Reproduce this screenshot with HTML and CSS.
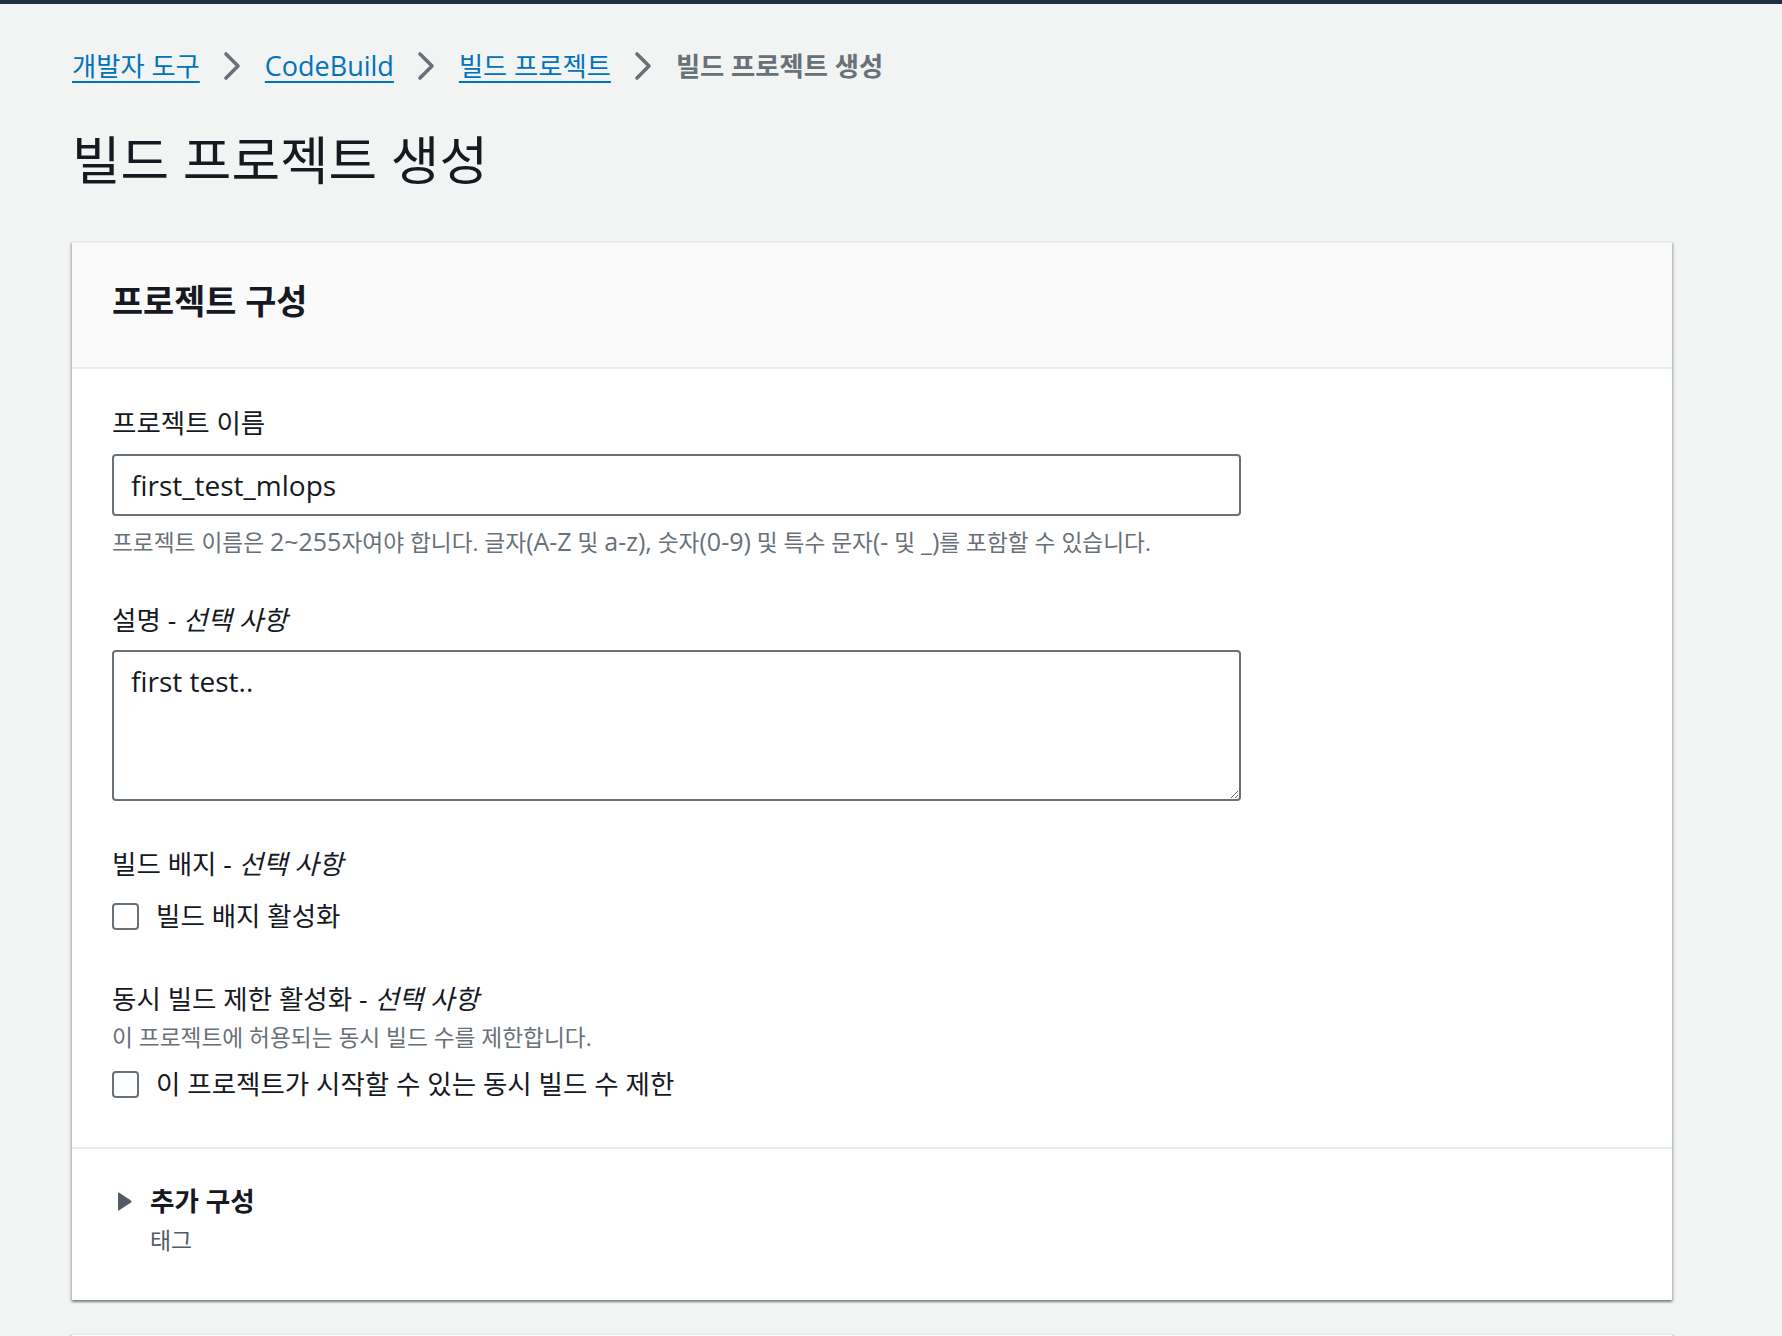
FILE: index.html
```html
<!DOCTYPE html>
<html lang="ko">
<head>
<meta charset="utf-8">
<title>빌드 프로젝트 생성</title>
<link rel="stylesheet" href="styles.css">
</head>
<body>
<div class="topbar"></div>
<main class="page">
  <nav class="breadcrumbs">
    <a class="crumb" href="#">개발자 도구</a>
    <svg class="chev" width="18" height="30" viewBox="0 0 18 30"><path d="M3 3 L15 15 L3 27"/></svg>
    <a class="crumb crumb-latin" href="#">CodeBuild</a>
    <svg class="chev" width="18" height="30" viewBox="0 0 18 30"><path d="M3 3 L15 15 L3 27"/></svg>
    <a class="crumb" href="#">빌드 프로젝트</a>
    <svg class="chev" width="18" height="30" viewBox="0 0 18 30"><path d="M3 3 L15 15 L3 27"/></svg>
    <span class="crumb current">빌드 프로젝트 생성</span>
  </nav>

  <h1 class="title">빌드 프로젝트 생성</h1>

  <section class="card">
    <header class="card-header"><h2 class="card-title">프로젝트 구성</h2></header>
    <div class="card-body">
      <div class="field">
        <label class="label" for="pname">프로젝트 이름</label>
        <input class="input" id="pname" type="text" value="first_test_mlops">
        <p class="hint">프로젝트 이름은 <span class="lt">2~255</span>자여야 합니다. 글자<span class="lt">(A-Z</span> 및 <span class="lt">a-z),</span> 숫자<span class="lt">(0-9)</span> 및 특수 문자<span class="lt">(-</span> 및 <span class="lt">_)</span>를 포함할 수 있습니다.</p>
      </div>

      <div class="field f-desc">
        <label class="label" for="pdesc">설명 - <i>선택 사항</i></label>
        <textarea class="textarea" id="pdesc">first test..</textarea>
      </div>

      <div class="field f-badge">
        <div class="label">빌드 배지 - <i>선택 사항</i></div>
        <label class="check-row"><input class="cb" type="checkbox"><span>빌드 배지 활성화</span></label>
      </div>

      <div class="field f-limit">
        <div class="label">동시 빌드 제한 활성화 - <i>선택 사항</i></div>
        <p class="hint hint-tight">이 프로젝트에 허용되는 동시 빌드 수를 제한합니다.</p>
        <label class="check-row check-row-tight"><input class="cb" type="checkbox"><span>이 프로젝트가 시작할 수 있는 동시 빌드 수 제한</span></label>
      </div>
    </div>

    <div class="expander">
      <div class="exp-head">
        <svg class="caret" width="15" height="19" viewBox="0 0 15 19"><path d="M1 1.5 Q1 0 2.3 0.8 L14 8.4 Q15 9.5 14 10.6 L2.3 18.2 Q1 19 1 17.5 Z"/></svg>
        <span class="exp-title">추가 구성</span>
      </div>
      <div class="exp-sub">태그</div>
    </div>
  </section>

  <section class="card card-next">
    <div class="card-next-header"></div>
  </section>
</main>
</body>
</html>
```

FILE: styles.css
```css
html, body {
  margin: 0;
  padding: 0;
}

body {
  background: #f2f3f3;
  font-family: "Open Sans", "Noto Sans CJK KR", sans-serif;
  color: #16191f;
  overflow: hidden;
}

.topbar {
  height: 4px;
  background: #232f3e;
}

.page {
  width: 1600px;
  padding: 44px 0 0 72px;
}

/* Breadcrumbs */
.breadcrumbs {
  display: flex;
  align-items: center;
  height: 36px;
  font-size: 26.3px;
  line-height: 36px;
}

.crumb {
  color: #0073bb;
  text-decoration: underline;
  text-decoration-thickness: 2px;
  text-underline-offset: 5px;
  white-space: nowrap;
}

.crumb-latin {
  font-size: 27px;
}

.crumb.current {
  color: #687078;
  font-weight: 700;
  text-decoration: none;
}

.chev {
  display: block;
  margin: 0 24px 0 23px;
  flex: none;
}

.chev path {
  fill: none;
  stroke: #687078;
  stroke-width: 3.6;
  stroke-linecap: round;
  stroke-linejoin: round;
}

/* Title */
.title {
  margin: 46px 0 51px;
  font-size: 52.8px;
  line-height: 60px;
  font-weight: 400;
  color: #16191f;
}

/* Card */
.card {
  background: #ffffff;
  border-top: 2px solid #eaeded;
  box-shadow: 0 2px 2px 0 rgba(0, 28, 36, 0.3),
              2px 2px 2px 0 rgba(0, 28, 36, 0.15),
              -2px 2px 2px 0 rgba(0, 28, 36, 0.15);
}

.card-header {
  background: #fafafa;
  padding: 38px 40px 46px;
  border-bottom: 2px solid #eaeded;
}

.card-title {
  margin: 0;
  font-size: 33.8px;
  line-height: 40px;
  font-weight: 700;
  color: #16191f;
}

.card-body {
  padding: 37px 40px 46px;
}

.field + .field {
  margin-top: 46px;
}

.field.f-desc {
  margin-top: 45px;
}

.field.f-limit {
  margin-top: 49px;
}

.label {
  display: block;
  font-size: 26.5px;
  line-height: 34px;
  color: #16191f;
}

.label i {
  font-style: italic;
}

.input,
.textarea {
  display: block;
  box-sizing: border-box;
  width: 1129px;
  margin: 14px 0 0;
  border: 2px solid #687078;
  border-radius: 4px;
  background: #ffffff;
  font-family: "Open Sans", "Noto Sans CJK KR", sans-serif;
  font-size: 28px;
  color: #16191f;
  outline: none;
}

.input {
  height: 62px;
  padding: 0 17px;
}

.textarea {
  margin-top: 13px;
  height: 151px;
  padding: 11px 17px;
  line-height: 36px;
  resize: vertical;
}

.hint {
  margin: 10px 0 0;
  font-size: 22.7px;
  line-height: 30px;
  color: #687078;
}

.hint .lt {
  font-size: 25px;
}

.hint-tight {
  margin-top: 7px;
}

.check-row {
  display: flex;
  align-items: center;
  gap: 17px;
  margin-top: 18px;
  font-size: 26.5px;
  line-height: 34px;
  color: #16191f;
}

.check-row-tight {
  margin-top: 14px;
}

.cb {
  appearance: none;
  -webkit-appearance: none;
  box-sizing: border-box;
  width: 27px;
  height: 27px;
  margin: 0;
  border: 2px solid #687078;
  border-radius: 4px;
  background: #ffffff;
  flex: none;
}

/* Expandable section */
.expander {
  border-top: 2px solid #eaeded;
  padding: 35px 40px 44px 45px;
}

.exp-head {
  display: flex;
  align-items: center;
  gap: 18px;
  line-height: 34px;
}

.caret {
  display: block;
  flex: none;
}

.caret path {
  fill: #545b64;
}

.exp-title {
  font-size: 26.6px;
  font-weight: 700;
  color: #16191f;
}

.exp-sub {
  margin: 8px 0 0 33px;
  font-size: 22.9px;
  line-height: 30px;
  color: #545b64;
}

/* Next card (partially visible) */
.card-next {
  margin-top: 33px;
  height: 120px;
}

.card-next-header {
  height: 120px;
  background: #fafafa;
}
```
